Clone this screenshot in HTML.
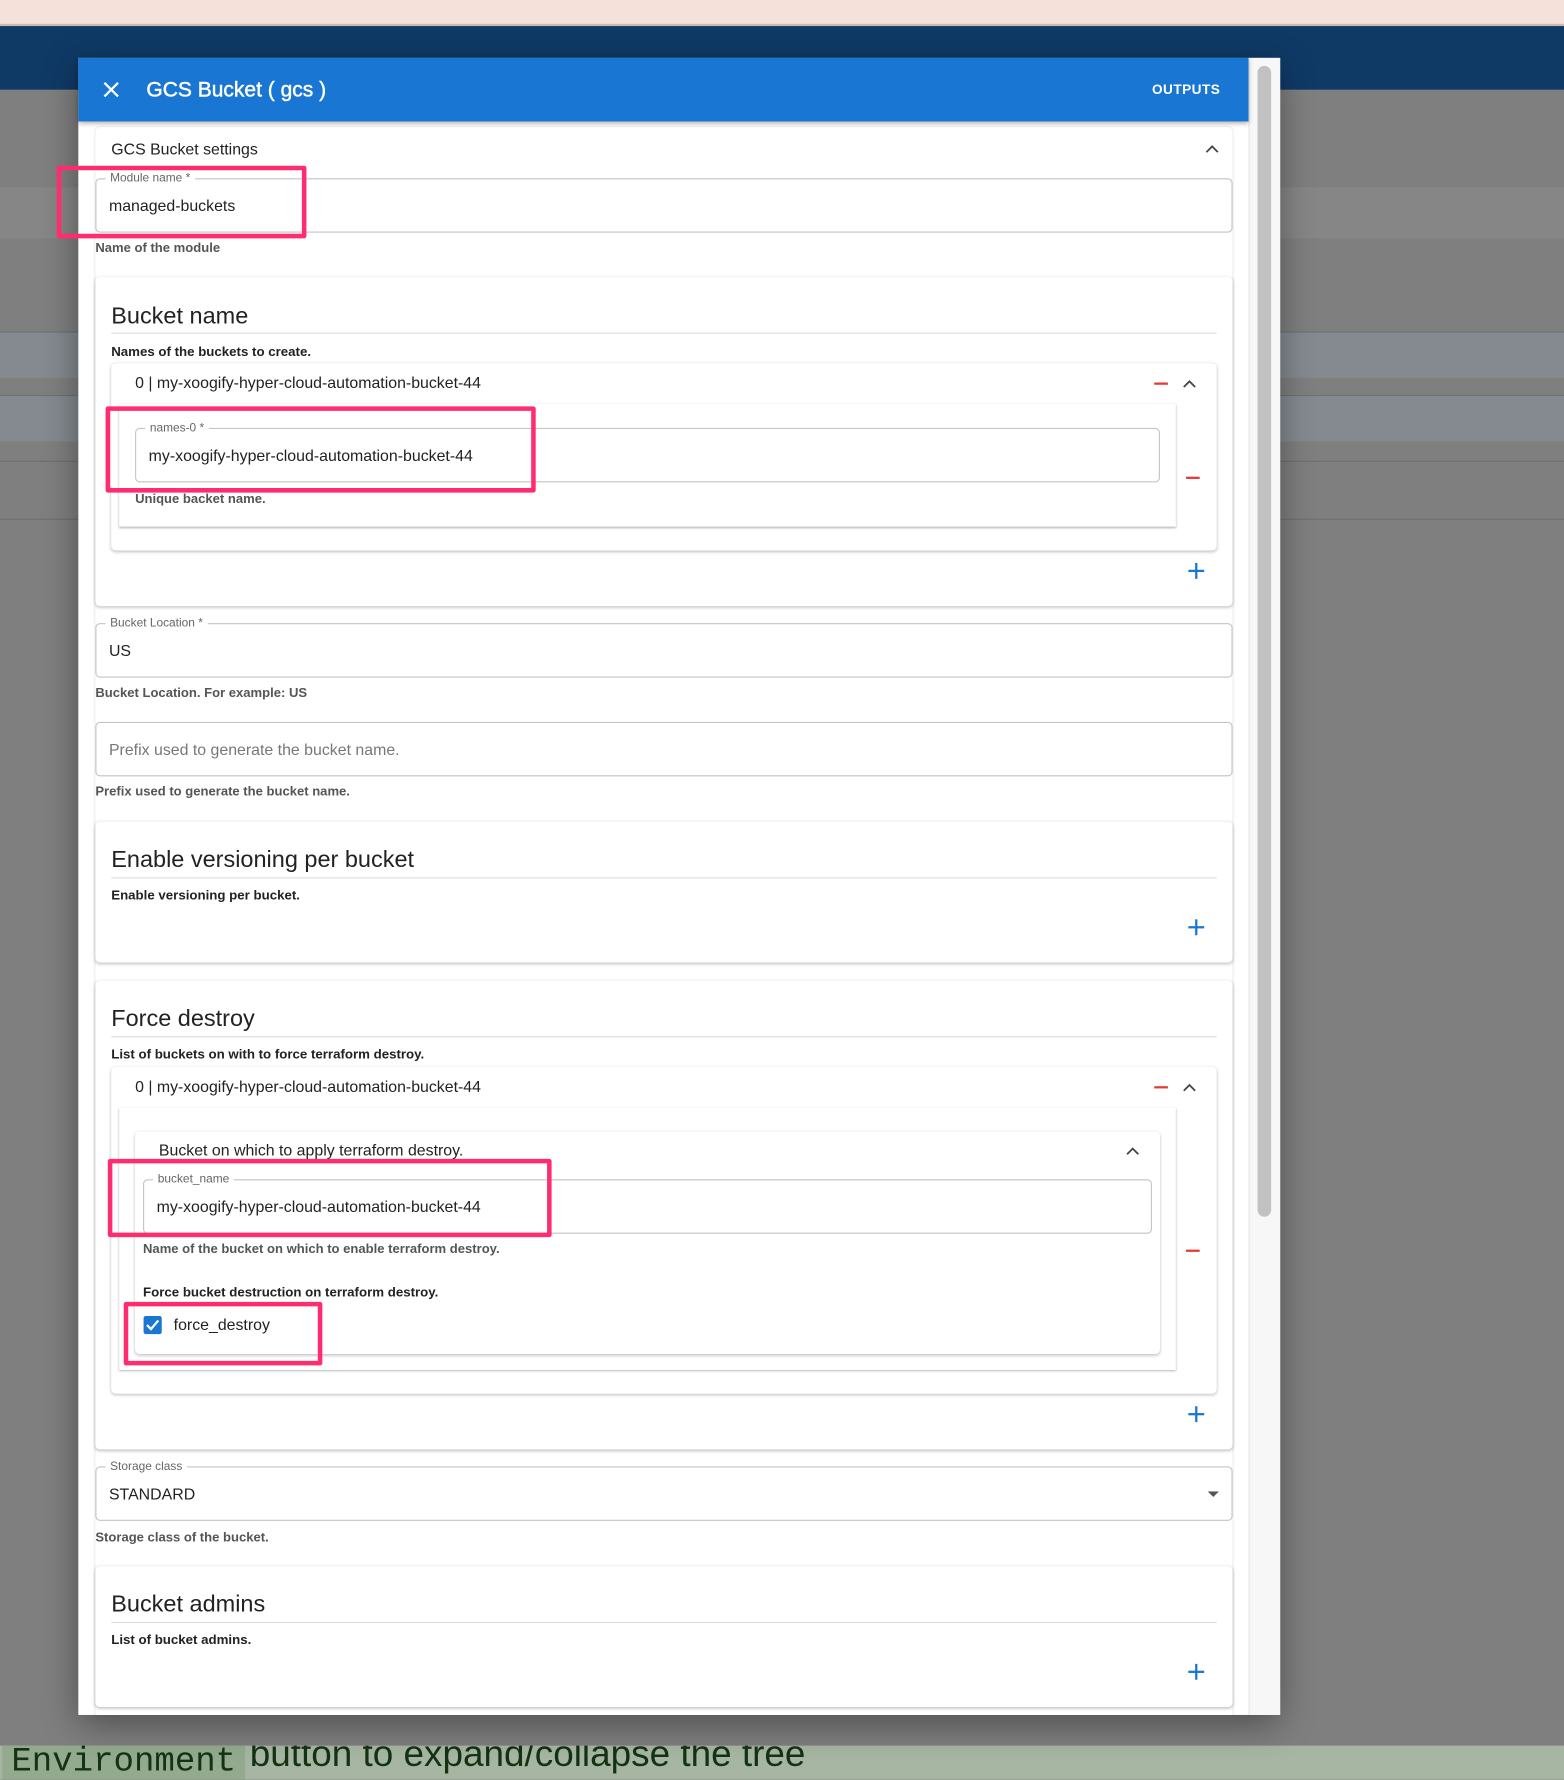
<!DOCTYPE html>
<html><head><meta charset="utf-8"><style>
html,body{margin:0;padding:0;width:1564px;height:1780px;overflow:hidden;background:#7f7f7f;font-family:"Liberation Sans",sans-serif}
#s{position:absolute;left:0;top:0;width:1378px;height:1568px;transform:scale(1.13498);transform-origin:0 0}
.a{position:absolute}
.t{position:absolute;white-space:nowrap;transform:translateY(-50%)}
.fld{position:absolute;border:1px solid #c4c4c4;border-radius:4px;background:#fff;box-sizing:border-box}
.lbl{position:absolute;top:-7px;left:8px;background:#fff;padding:0 4px;font-size:10.5px;color:#666;line-height:13px}
.val{position:absolute;left:11px;top:50%;transform:translateY(-50%);font-size:14px;color:#222}
.help{font-size:11.5px;color:#555;font-weight:bold}
.card{position:absolute;background:#fff;border-radius:4px;box-shadow:0 1px 3px rgba(0,0,0,.25)}
.h{font-size:20.7px;color:#222}
.hl{position:absolute;height:1px;background:#ddd}
.desc{font-size:11.7px;color:#222;font-weight:bold}
.pink{position:absolute;border:4px solid #ff2d6f;border-radius:2px;box-sizing:border-box}
.minus{position:absolute;width:12px;height:2px;background:#e53935}
.plus{position:absolute;width:14px;height:14px}
.plus:before{content:"";position:absolute;left:0;top:6px;width:14px;height:2px;background:#1976d2}
.plus:after{content:"";position:absolute;left:6px;top:0;width:2px;height:14px;background:#1976d2}
</style></head><body><div id="s">
<div class="a" style="left:0;top:0;width:1378px;height:21px;background:#f5e0da;border-bottom:2px solid #c9b8b5"></div>
<div class="a" style="left:0;top:23px;width:1378px;height:56px;background:#0f3a66"></div>
<div class="a" style="left:0;top:165px;width:1378px;height:45px;background:#868686"></div>
<div class="a" style="left:0;top:292px;width:1378px;height:1px;background:#6f6f6f"></div>
<div class="a" style="left:0;top:293px;width:1378px;height:40px;background:#848a90"></div>
<div class="a" style="left:0;top:348px;width:1378px;height:1px;background:#6f6f6f"></div>
<div class="a" style="left:0;top:349px;width:1378px;height:40px;background:#848a90"></div>
<div class="a" style="left:0;top:406px;width:1378px;height:1px;background:#6f6f6f"></div>
<div class="a" style="left:0;top:457px;width:1378px;height:1px;background:#6f6f6f"></div>
<!-- bottom band -->
<div class="a" style="left:0;top:1538px;width:1378px;height:30px;background:#a7b6a3;overflow:hidden">
<div class="a" style="left:2px;top:-6px;height:40px;padding:0 8px;background:#93aa8e;border-radius:6px;font-family:'Liberation Mono',monospace;font-size:30px;color:#143214;line-height:42px">Environment</div>
<div class="a" style="left:220px;top:-14px;font-size:32.5px;color:#143214;line-height:42px">button to expand/collapse the tree</div>
</div>
<!-- dialog -->
<div class="a" style="left:69px;top:51px;width:1058px;height:1460px;background:#fff;box-shadow:0 8px 30px rgba(0,0,0,.4);overflow:hidden">
<div class="a" style="left:15px;top:61px;width:1002px;height:1420px;background:#fff;border-radius:4px;box-shadow:0 0 2px rgba(0,0,0,.15)"></div>
</div>
<div class="a" style="left:1100px;top:51px;width:27px;height:1460px;background:#f7f7f7;border-left:1px solid #e6e6e6"></div>
<div class="a" style="left:1108px;top:58px;width:12px;height:1014px;background:#c1c1c1;border-radius:6px"></div>
<div class="a" style="left:69px;top:51px;width:1031px;height:56px;background:#1976d2;box-shadow:0 2px 4px rgba(0,0,0,.3)"></div>
<svg class="a" style="left:91px;top:72px" width="14" height="14"><path d="M1 1L13 13M13 1L1 13" stroke="#fff" stroke-width="2"/></svg>
<div class="t" style="left:129px;top:79px;font-size:18.5px;color:#fff;-webkit-text-stroke:0.4px #fff">GCS Bucket ( gcs )</div>
<div class="t" style="left:1015px;top:79px;font-size:12px;color:#fff;font-weight:bold;letter-spacing:.4px">OUTPUTS</div>
<div class="t" style="left:98px;top:131px;font-size:14px;color:#222">GCS Bucket settings</div>
<svg class="a" style="left:1062px;top:127px" width="12" height="8"><path d="M1 7L6 2L11 7" stroke="#444" stroke-width="1.6" fill="none"/></svg>
<div class="fld" style="left:84px;top:157px;width:1002px;height:48px"><div class="lbl">Module name *</div><div class="val">managed-buckets</div></div>
<div class="t help" style="left:84px;top:219px">Name of the module</div>
<div class="pink" style="left:50px;top:146px;width:220px;height:64px"></div>
<!-- Bucket name -->
<div class="card" style="left:84px;top:244px;width:1002px;height:290px"></div>
<div class="t h" style="left:98px;top:279px">Bucket name</div>
<div class="hl" style="left:98px;top:293px;width:974px"></div>
<div class="t desc" style="left:98px;top:310px">Names of the buckets to create.</div>
<div class="card" style="left:98px;top:320px;width:974px;height:165px"></div>
<div class="t" style="left:119px;top:337px;font-size:14px;color:#222">0 | my-xoogify-hyper-cloud-automation-bucket-44</div>
<div class="minus" style="left:1017px;top:337px"></div>
<svg class="a" style="left:1042px;top:334px" width="12" height="8"><path d="M1 7L6 2L11 7" stroke="#444" stroke-width="1.6" fill="none"/></svg>
<div class="a" style="left:105px;top:356px;width:931px;height:108px;background:#fff;box-shadow:0 1px 2px rgba(0,0,0,.3)"></div>
<div class="fld" style="left:119px;top:377px;width:903px;height:48px"><div class="lbl">names-0 *</div><div class="val">my-xoogify-hyper-cloud-automation-bucket-44</div></div>
<div class="t help" style="left:119px;top:440px">Unique backet name.</div>
<div class="minus" style="left:1045px;top:420px"></div>
<div class="pink" style="left:93px;top:358px;width:379px;height:76px"></div>
<div class="plus" style="left:1047px;top:496px"></div>
<!-- location -->
<div class="fld" style="left:84px;top:549px;width:1002px;height:48px"><div class="lbl">Bucket Location *</div><div class="val">US</div></div>
<div class="t help" style="left:84px;top:611px">Bucket Location. For example: US</div>
<div class="fld" style="left:84px;top:636px;width:1002px;height:48px"><div class="val" style="color:#777">Prefix used to generate the bucket name.</div></div>
<div class="t help" style="left:84px;top:698px">Prefix used to generate the bucket name.</div>
<!-- versioning -->
<div class="card" style="left:84px;top:724px;width:1002px;height:124px"></div>
<div class="t h" style="left:98px;top:758px">Enable versioning per bucket</div>
<div class="hl" style="left:98px;top:773px;width:974px"></div>
<div class="t desc" style="left:98px;top:789px">Enable versioning per bucket.</div>
<div class="plus" style="left:1047px;top:810px"></div>
<!-- force destroy -->
<div class="card" style="left:84px;top:864px;width:1002px;height:413px"></div>
<div class="t h" style="left:98px;top:898px">Force destroy</div>
<div class="hl" style="left:98px;top:913px;width:974px"></div>
<div class="t desc" style="left:98px;top:929px">List of buckets on with to force terraform destroy.</div>
<div class="card" style="left:98px;top:940px;width:974px;height:288px"></div>
<div class="t" style="left:119px;top:957px;font-size:14px;color:#222">0 | my-xoogify-hyper-cloud-automation-bucket-44</div>
<div class="minus" style="left:1017px;top:957px"></div>
<svg class="a" style="left:1042px;top:954px" width="12" height="8"><path d="M1 7L6 2L11 7" stroke="#444" stroke-width="1.6" fill="none"/></svg>
<div class="a" style="left:105px;top:976px;width:931px;height:231px;background:#fff;box-shadow:0 1px 2px rgba(0,0,0,.3)"></div>
<div class="card" style="left:119px;top:997px;width:903px;height:196px"></div>
<div class="t" style="left:140px;top:1013px;font-size:14px;color:#222">Bucket on which to apply terraform destroy.</div>
<svg class="a" style="left:992px;top:1010px" width="12" height="8"><path d="M1 7L6 2L11 7" stroke="#444" stroke-width="1.6" fill="none"/></svg>
<div class="fld" style="left:126px;top:1039px;width:889px;height:48px"><div class="lbl">bucket_name</div><div class="val">my-xoogify-hyper-cloud-automation-bucket-44</div></div>
<div class="t help" style="left:126px;top:1101px">Name of the bucket on which to enable terraform destroy.</div>
<div class="t desc" style="left:126px;top:1139px">Force bucket destruction on terraform destroy.</div>
<svg class="a" style="left:126px;top:1159px" width="17" height="17"><rect x="0.5" y="0.5" width="16" height="16" rx="2" fill="#1976d2"/><path d="M3.5 8.5L7 12L13.5 4.5" stroke="#fff" stroke-width="2" fill="none"/></svg>
<div class="t" style="left:153px;top:1167px;font-size:14px;color:#222">force_destroy</div>
<div class="minus" style="left:1045px;top:1101px"></div>
<div class="pink" style="left:95px;top:1021px;width:391px;height:69px"></div>
<div class="pink" style="left:109px;top:1147px;width:175px;height:56px"></div>
<div class="plus" style="left:1047px;top:1239px"></div>
<!-- storage class -->
<div class="fld" style="left:84px;top:1292px;width:1002px;height:48px"><div class="lbl">Storage class</div><div class="val">STANDARD</div></div>
<svg class="a" style="left:1064px;top:1314px" width="10" height="6"><path d="M0 0L10 0L5 5Z" fill="#555"/></svg>
<div class="t help" style="left:84px;top:1355px">Storage class of the bucket.</div>
<!-- admins -->
<div class="card" style="left:84px;top:1380px;width:1002px;height:124px"></div>
<div class="t h" style="left:98px;top:1414px">Bucket admins</div>
<div class="hl" style="left:98px;top:1429px;width:974px"></div>
<div class="t desc" style="left:98px;top:1445px">List of bucket admins.</div>
<div class="plus" style="left:1047px;top:1466px"></div>
</div></body></html>
